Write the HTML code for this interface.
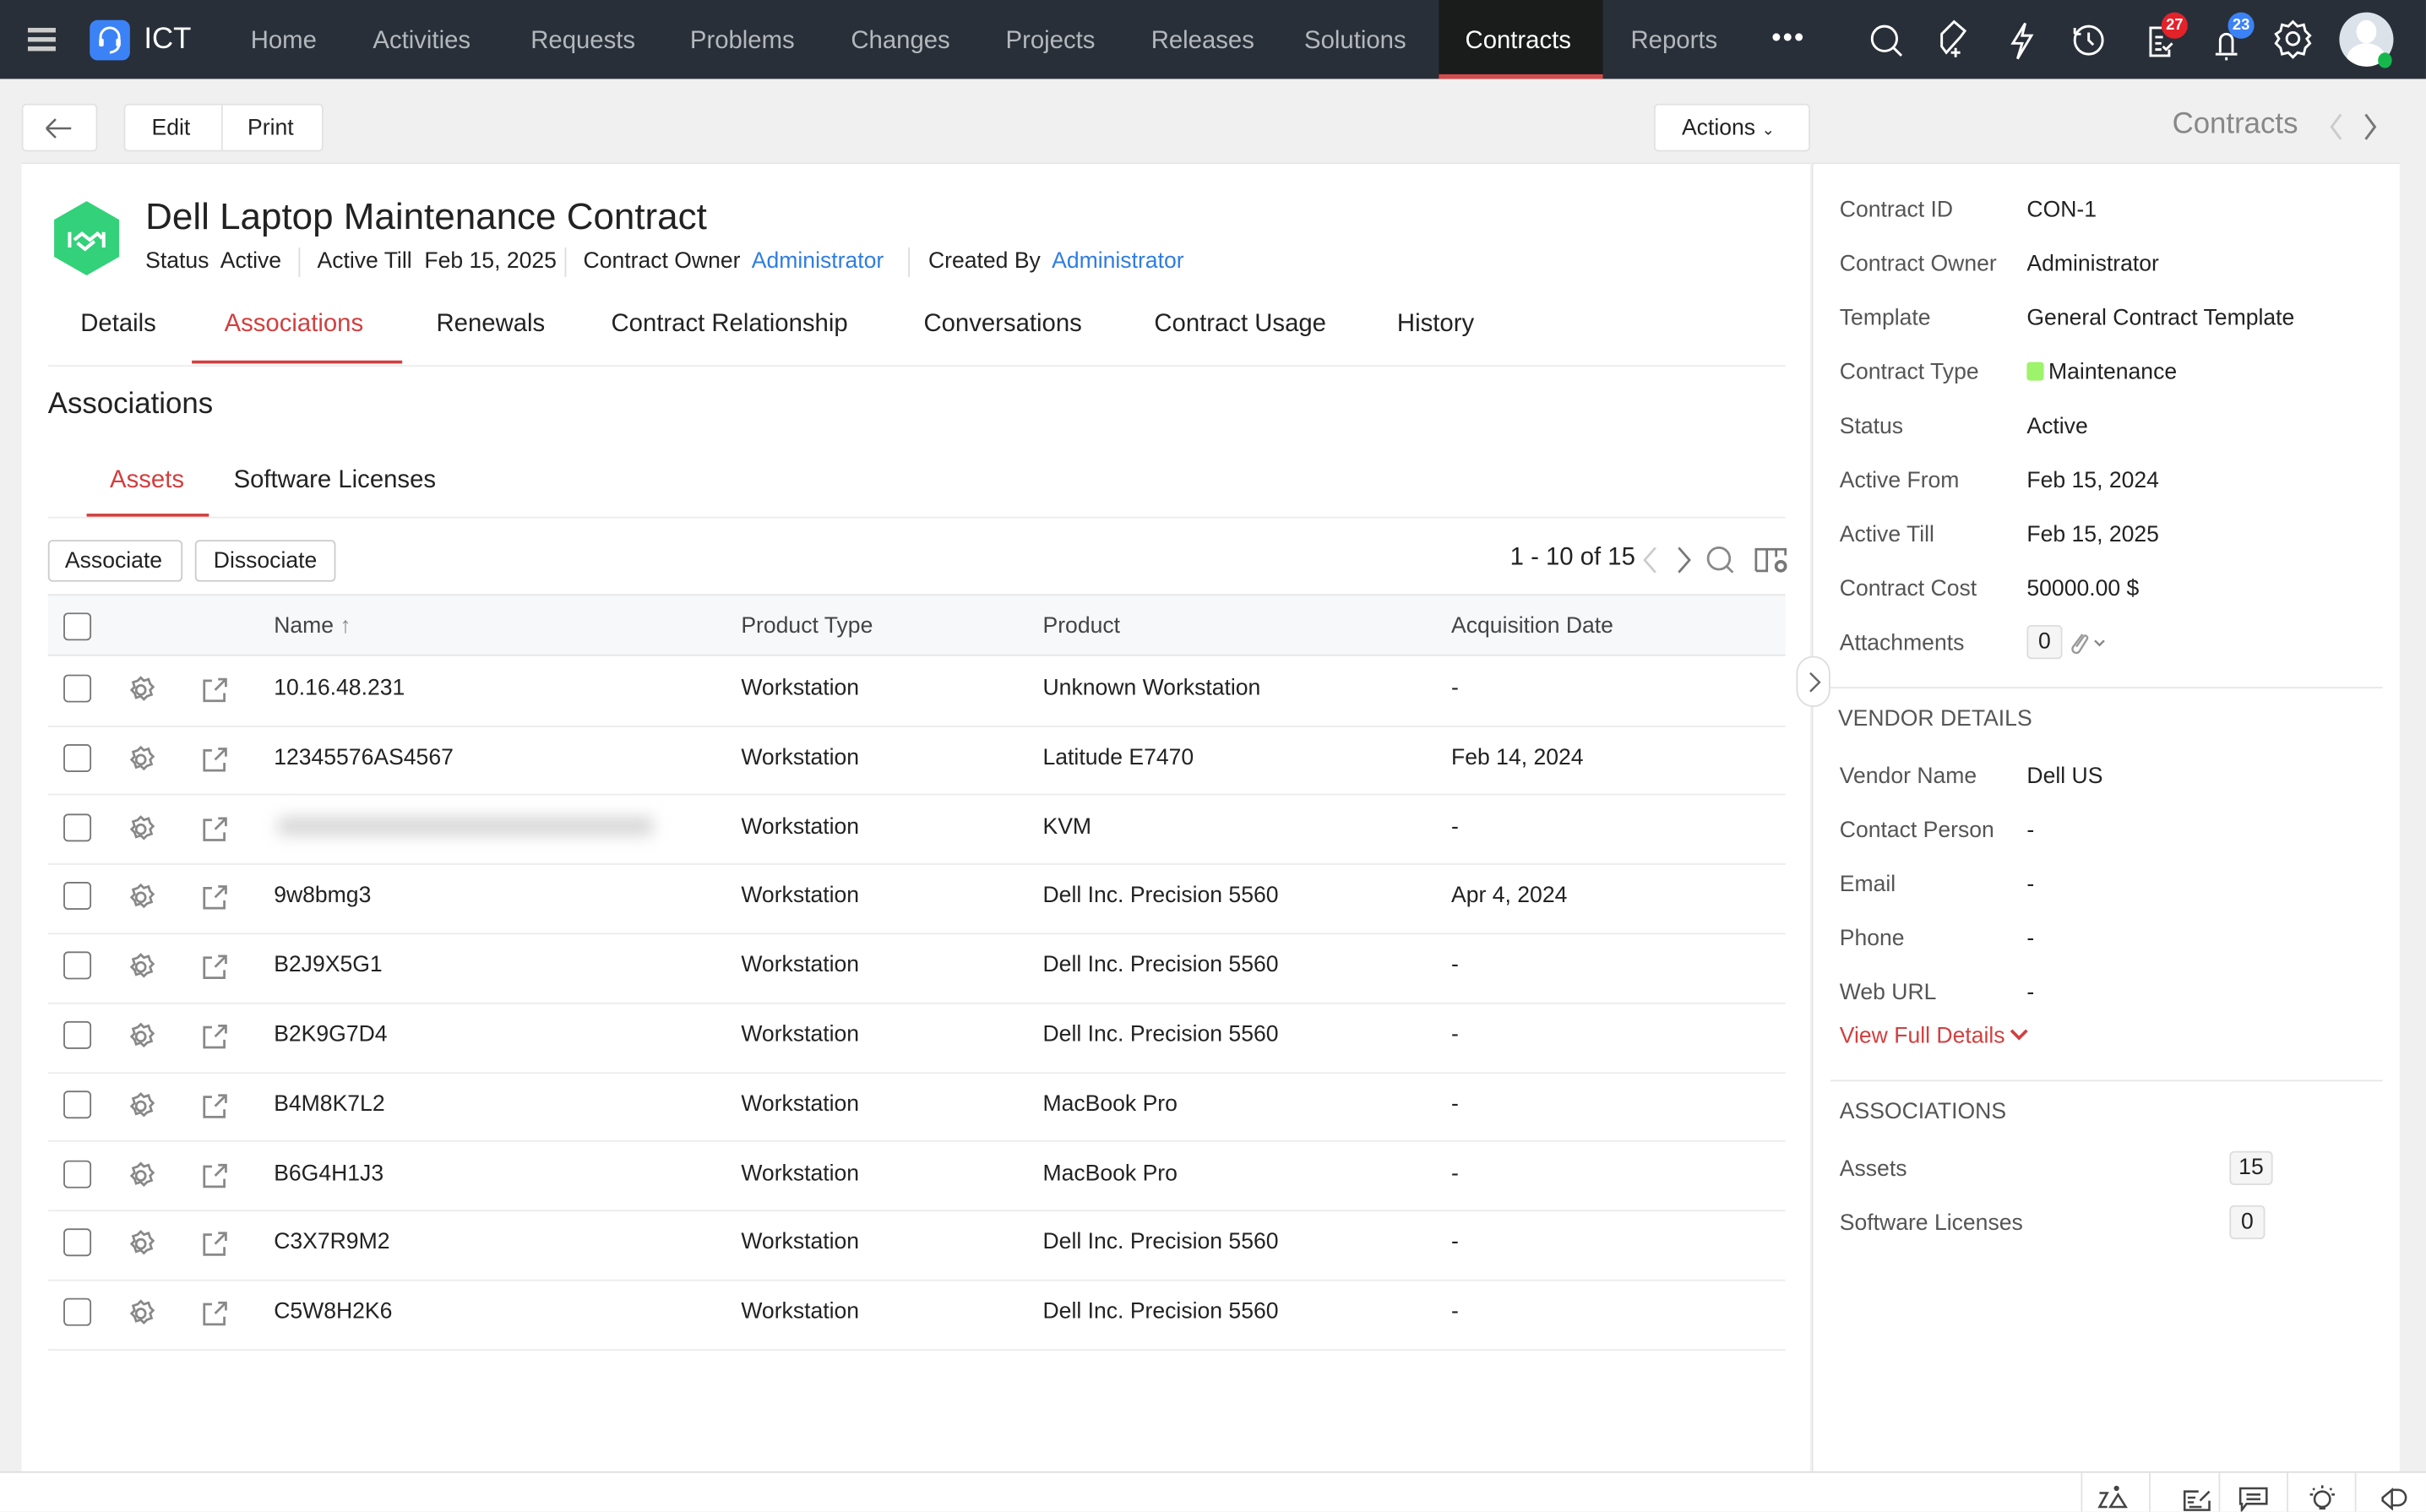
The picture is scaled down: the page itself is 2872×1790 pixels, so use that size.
<!DOCTYPE html>
<html><head><meta charset="utf-8">
<style>
*{box-sizing:border-box;margin:0;padding:0}
html,body{width:2872px;height:1790px;overflow:hidden;background:#f0f0f0}
#w{position:absolute;left:0;top:0;width:1568px;height:977px;transform:scale(1.8316);transform-origin:0 0;font-family:"Liberation Sans",sans-serif;color:#222;background:#f0f0f0}
.a{position:absolute;white-space:nowrap}
.nav{left:0;top:0;width:1568px;height:51px;background:#282f38}
.nv{top:18px;font-size:16px;color:#b4b8bd}
.btn{background:#fff;border:1px solid #e2e2e2;border-radius:3px}
.lbl{color:#555;font-size:14.5px;margin-top:1px}
.val{color:#222;font-size:14.5px;margin-top:1px}
.t{font-size:14.5px;color:#222;margin-top:1px}
.cb{width:18px;height:18px;border:1.5px solid #777;border-radius:3px;background:#fff}
.sep{height:1px;background:#ececec}
.cnt{border:1px solid #ddd;background:#f5f5f5;border-radius:3px;font-size:14.5px;text-align:center;height:22px;line-height:20px}
</style></head><body><div id="w">
<div class="a nav"></div>
<div class="a" style="left:18px;top:18px;width:18px;height:2.5px;background:#ccc;box-shadow:0 6px 0 #ccc,0 12px 0 #ccc"></div>
<div class="a" style="left:58px;top:13px;width:26px;height:26px;background:#3b82f6;border-radius:5px"></div>
<svg class="a" style="left:58px;top:13px" width="26" height="26" viewBox="0 0 26 26"><path d="M7 14 V11 a6 6 0 0 1 12 0 V14 M19 15 q0 5 -6 6" stroke="#fff" stroke-width="1.6" fill="none"/><rect x="6" y="12" width="3" height="5" rx="1" fill="#fff"/><rect x="17" y="12" width="3" height="5" rx="1" fill="#fff"/></svg>
<div class="a" style="left:93px;top:15px;font-size:19px;color:#fff">ICT</div>
<div class="a nv" style="left:162px">Home</div>
<div class="a nv" style="left:241px">Activities</div>
<div class="a nv" style="left:343px">Requests</div>
<div class="a nv" style="left:446px">Problems</div>
<div class="a nv" style="left:550px">Changes</div>
<div class="a nv" style="left:650px">Projects</div>
<div class="a nv" style="left:744px">Releases</div>
<div class="a nv" style="left:843px">Solutions</div>
<div class="a" style="left:930px;top:0;width:106px;height:51px;background:#1a1c1c;border-bottom:3px solid #d64b4b"></div>
<div class="a nv" style="left:947px;color:#fff">Contracts</div>
<div class="a nv" style="left:1054px">Reports</div>
<div class="a" style="left:1145px;top:14px;font-size:18px;color:#fff;letter-spacing:1px">•••</div>
<svg class="a" style="left:1200px;top:0" width="368" height="51" viewBox="0 0 368 51" fill="none" stroke="#fff" stroke-width="1.6">
<circle cx="18" cy="25" r="8"/><path d="M24 31 L29 36"/>
<path d="M55 22 L63 14 L70 20 L67 24 L58 34 L55 30 Z"/><path d="M64 31 v6 M61 34 h6"/>
<path d="M109 15 L101 28 H107 L104 38 L113 23 H107 Z"/>
<circle cx="150" cy="26" r="9"/><path d="M150 21 v5 l3 3"/><path d="M141 22 l0 -4 M141 22 l4 0"/>
<path d="M200 18 h-10 v18 h12 v-4"/><path d="M193 24 h5 M193 28 h4 M193 32 h4 M198 30 l2 2 l4 -4"/>
<path d="M232 35 h14 M235 34 v-8 a4 4 0 0 1 8 0 v8 M239 37 v2"/>
<circle cx="282" cy="25" r="4"/><path d="M282 14 l3 3 l4 -1 l1 4 l3 3 l-2 2 l2 3 l-3 3 l-1 4 l-4 -1 l-3 3 l-3 -3 l-4 1 l-1 -4 l-3 -3 l2 -3 l-2 -3 l3 -2 l1 -4 l4 1 z"/>
</svg>
<div class="a" style="left:1397px;top:8px;width:17px;height:17px;border-radius:50%;background:#e3222a;color:#fff;font-size:10px;font-weight:bold;text-align:center;line-height:17px">27</div>
<div class="a" style="left:1440px;top:8px;width:17px;height:17px;border-radius:50%;background:#3b82f6;color:#fff;font-size:10px;font-weight:bold;text-align:center;line-height:17px">23</div>
<div class="a" style="left:1512px;top:8px;width:35px;height:35px;border-radius:50%;background:#dce2ea;overflow:hidden"><div style="position:absolute;left:11px;top:5px;width:13px;height:15px;border-radius:50%;background:#fff"></div><div style="position:absolute;left:5px;top:20px;width:25px;height:20px;border-radius:50% 50% 0 0;background:#fff"></div></div>
<div class="a" style="left:1537px;top:34px;width:9px;height:10px;border-radius:50%;background:#16b84e"></div>

<div class="a btn" style="left:14px;top:67px;width:49px;height:31px"></div>
<svg class="a" style="left:26px;top:73px" width="24" height="20"><path d="M4 10 H20 M4 10 L10 4 M4 10 L10 16" stroke="#666" stroke-width="1.4" fill="none"/></svg>
<div class="a btn" style="left:80px;top:67px;width:129px;height:31px"></div>
<div class="a" style="left:143px;top:68px;width:1px;height:29px;background:#e2e2e2"></div>
<div class="a t" style="left:98px;top:74px">Edit</div>
<div class="a t" style="left:160px;top:74px">Print</div>
<div class="a btn" style="left:1069px;top:67px;width:101px;height:31px"></div>
<div class="a t" style="left:1087px;top:74px">Actions <span style="font-size:10px">⌄</span></div>
<div class="a" style="left:1404px;top:70px;font-size:19px;color:#888">Contracts</div>
<svg class="a" style="left:1500px;top:70px" width="44" height="24" fill="none" stroke-width="1.6"><path d="M13 4 L7 12 L13 20" stroke="#ccc"/><path d="M29 4 L35 12 L29 20" stroke="#777"/></svg>

<div class="a" style="left:14px;top:105px;width:1156px;height:846px;background:#fff;border-top:1px solid #e6e6e6"></div>
<svg class="a" style="left:32px;top:128px" width="48" height="52"><path d="M24 2 L45 14 V38 L24 50 L3 38 V14 Z" fill="#33d17a"/><path d="M13 22 v10 M35 22 v10 M16 27 l5 -4 l5 4 l5 -4 l3 3 M18 29 l5 4 l6 -5" stroke="#fff" stroke-width="2.2" fill="none"/></svg>
<div class="a" style="left:94px;top:127px;font-size:24px;color:#222">Dell Laptop Maintenance Contract</div>
<div class="a t" style="left:94px;top:160px">Status&nbsp; Active</div>
<div class="a" style="left:193px;top:160px;width:1px;height:19px;background:#ddd"></div>
<div class="a t" style="left:205px;top:160px">Active Till&nbsp; Feb 15, 2025</div>
<div class="a" style="left:365px;top:160px;width:1px;height:19px;background:#ddd"></div>
<div class="a t" style="left:377px;top:160px">Contract Owner&nbsp; <span style="color:#2f7de1">Administrator</span></div>
<div class="a" style="left:587px;top:160px;width:1px;height:19px;background:#ddd"></div>
<div class="a t" style="left:600px;top:160px">Created By&nbsp; <span style="color:#2f7de1">Administrator</span></div>

<div class="a" style="left:52px;top:201px;font-size:16px">Details</div>
<div class="a" style="left:145px;top:201px;font-size:16px;color:#d23f3f">Associations</div>
<div class="a" style="left:124px;top:233px;width:136px;height:2px;background:#d23f3f"></div>
<div class="a" style="left:282px;top:201px;font-size:16px">Renewals</div>
<div class="a" style="left:395px;top:201px;font-size:16px">Contract Relationship</div>
<div class="a" style="left:597px;top:201px;font-size:16px">Conversations</div>
<div class="a" style="left:746px;top:201px;font-size:16px">Contract Usage</div>
<div class="a" style="left:903px;top:201px;font-size:16px">History</div>
<div class="a sep" style="left:31px;top:236px;width:1123px"></div>

<div class="a" style="left:31px;top:251px;font-size:19px">Associations</div>
<div class="a" style="left:71px;top:302px;font-size:16px;color:#d23f3f">Assets</div>
<div class="a" style="left:56px;top:332px;width:79px;height:2px;background:#d23f3f"></div>
<div class="a" style="left:151px;top:302px;font-size:16px">Software Licenses</div>
<div class="a sep" style="left:31px;top:334px;width:1123px"></div>

<div class="a btn" style="left:31px;top:349px;width:87px;height:27px;border-color:#ccc"></div>
<div class="a t" style="left:42px;top:354px">Associate</div>
<div class="a btn" style="left:126px;top:349px;width:91px;height:27px;border-color:#ccc"></div>
<div class="a t" style="left:138px;top:354px">Dissociate</div>
<div class="a" style="left:976px;top:352px;font-size:16px">1 - 10 of 15</div>
<svg class="a" style="left:1056px;top:350px" width="104" height="24" fill="none" stroke-width="1.5"><path d="M14 4 L7 12 L14 20" stroke="#ccc"/><path d="M29 4 L36 12 L29 20" stroke="#777"/><circle cx="55" cy="11" r="7" stroke="#888"/><path d="M60 16 L64 20" stroke="#888"/><path d="M79 19 V5 H98 V9 M86 5 V19 H79 M92 5 V10" stroke="#777"/><circle cx="95" cy="16" r="3" stroke="#777" stroke-width="2"/></svg>

<div class="a" style="left:31px;top:384px;width:1123px;height:40px;background:#f6f8fa;border-top:1px solid #e6e6e6;border-bottom:1px solid #e6e6e6"></div>
<div class="a cb" style="left:41px;top:396px"></div>
<div class="a t" style="left:177px;top:396px;color:#444">Name <span style="color:#888">↑</span></div>
<div class="a t" style="left:479px;top:396px;color:#444">Product Type</div>
<div class="a t" style="left:674px;top:396px;color:#444">Product</div>
<div class="a t" style="left:938px;top:396px;color:#444">Acquisition Date</div>

<div id="rows"></div>
<script>
var d=[["10.16.48.231","Unknown Workstation","-"],["12345576AS4567","Latitude E7470","Feb 14, 2024"],["","KVM","-"],["9w8bmg3","Dell Inc. Precision 5560","Apr 4, 2024"],["B2J9X5G1","Dell Inc. Precision 5560","-"],["B2K9G7D4","Dell Inc. Precision 5560","-"],["B4M8K7L2","MacBook Pro","-"],["B6G4H1J3","MacBook Pro","-"],["C3X7R9M2","Dell Inc. Precision 5560","-"],["C5W8H2K6","Dell Inc. Precision 5560","-"]];
var h="";
var gear='<svg width="20" height="20" viewBox="0 0 20 20" fill="none" stroke="#888" stroke-width="1.5"><circle cx="10" cy="10" r="3"/><path d="M10 2 l2 2 l3 -1 l1 3 l2 2 l-2 2 l1 3 l-3 1 l-2 2 l-2 -2 l-3 1 l-1 -3 l-2 -2 l2 -2 l-1 -3 l3 -1 z"/></svg>';
var lnk='<svg width="20" height="20" viewBox="0 0 20 20" fill="none" stroke="#888" stroke-width="1.5"><path d="M8 4 H3 V17 H16 V12"/><path d="M10 10 L17 3 M12 3 H17 V8"/></svg>';
for(var i=0;i<10;i++){var y=424+i*44.8;
h+='<div class="a cb" style="left:41px;top:'+(y+12)+'px"></div>';
h+='<div class="a" style="left:81px;top:'+(y+12)+'px">'+gear+'</div>';
h+='<div class="a" style="left:129px;top:'+(y+12)+'px">'+lnk+'</div>';
if(d[i][0])h+='<div class="a t" style="left:177px;top:'+(y+12)+'px">'+d[i][0]+'</div>';
else h+='<div class="a" style="left:180px;top:'+(y+14)+'px;width:242px;height:12px;background:#d6d6d6;filter:blur(5px)"></div>';
h+='<div class="a t" style="left:479px;top:'+(y+12)+'px">Workstation</div>';
h+='<div class="a t" style="left:674px;top:'+(y+12)+'px">'+d[i][1]+'</div>';
h+='<div class="a t" style="left:938px;top:'+(y+12)+'px">'+d[i][2]+'</div>';
h+='<div class="a sep" style="left:31px;top:'+(y+44.5)+'px;width:1123px"></div>';}
document.getElementById('rows').innerHTML=h;
</script>

<div class="a" style="left:1171px;top:105px;width:380px;height:846px;background:#fff;border-left:1px solid #e6e6e6;border-top:1px solid #e6e6e6"></div>
<div class="a" style="left:1161px;top:424px;width:22px;height:33px;border:1px solid #ddd;border-radius:11px;background:#fff"></div>
<svg class="a" style="left:1166px;top:432px" width="14" height="18"><path d="M4 3 L10 9 L4 15" stroke="#666" stroke-width="1.3" fill="none"/></svg>
<div class="a lbl" style="left:1189px;top:127px">Contract ID</div><div class="a val" style="left:1310px;top:127px">CON-1</div>
<div class="a lbl" style="left:1189px;top:162px">Contract Owner</div><div class="a val" style="left:1310px;top:162px">Administrator</div>
<div class="a lbl" style="left:1189px;top:197px">Template</div><div class="a val" style="left:1310px;top:197px">General Contract Template</div>
<div class="a lbl" style="left:1189px;top:232px">Contract Type</div><div class="a" style="left:1310px;top:234px;width:11px;height:12px;background:#9df36a;border-radius:2px"></div><div class="a val" style="left:1324px;top:232px">Maintenance</div>
<div class="a lbl" style="left:1189px;top:267px">Status</div><div class="a val" style="left:1310px;top:267px">Active</div>
<div class="a lbl" style="left:1189px;top:302px">Active From</div><div class="a val" style="left:1310px;top:302px">Feb 15, 2024</div>
<div class="a lbl" style="left:1189px;top:337px">Active Till</div><div class="a val" style="left:1310px;top:337px">Feb 15, 2025</div>
<div class="a lbl" style="left:1189px;top:372px">Contract Cost</div><div class="a val" style="left:1310px;top:372px">50000.00 $</div>
<div class="a lbl" style="left:1189px;top:407px">Attachments</div><div class="a cnt" style="left:1310px;top:404px;width:23px">0</div>
<svg class="a" style="left:1336px;top:406px" width="30" height="18" fill="none"><path d="M10 4 L4 12 a2.5 2.5 0 0 0 4 3 L13 7 a1.5 1.5 0 0 0 -2 -2 L6 12" stroke="#999" stroke-width="1.3"/><path d="M18 8 L21 11 L24 8" stroke="#888" stroke-width="1.3"/></svg>
<div class="a sep" style="left:1183px;top:444px;width:357px;background:#e6e6e6"></div>
<div class="a" style="left:1188px;top:457px;font-size:14.5px;color:#555">VENDOR DETAILS</div>
<div class="a lbl" style="left:1189px;top:493px">Vendor Name</div><div class="a val" style="left:1310px;top:493px">Dell US</div>
<div class="a lbl" style="left:1189px;top:528px">Contact Person</div><div class="a val" style="left:1310px;top:528px">-</div>
<div class="a lbl" style="left:1189px;top:563px">Email</div><div class="a val" style="left:1310px;top:563px">-</div>
<div class="a lbl" style="left:1189px;top:598px">Phone</div><div class="a val" style="left:1310px;top:598px">-</div>
<div class="a lbl" style="left:1189px;top:633px">Web URL</div><div class="a val" style="left:1310px;top:633px">-</div>
<div class="a" style="left:1189px;top:662px;font-size:14.5px;color:#d23f3f">View Full Details</div>
<svg class="a" style="left:1298px;top:662px" width="14" height="14"><path d="M2 4 L7 9 L12 4" stroke="#d23f3f" stroke-width="2" fill="none"/></svg>
<div class="a sep" style="left:1183px;top:698px;width:357px;background:#e6e6e6"></div>
<div class="a" style="left:1189px;top:711px;font-size:14.5px;color:#555">ASSOCIATIONS</div>
<div class="a lbl" style="left:1189px;top:747px">Assets</div><div class="a cnt" style="left:1441px;top:744px;width:28px">15</div>
<div class="a lbl" style="left:1189px;top:782px">Software Licenses</div><div class="a cnt" style="left:1441px;top:779px;width:23px">0</div>

<div class="a" style="left:0;top:951px;width:1568px;height:26px;background:#fff;border-top:1px solid #ddd"></div>
<div class="a" style="left:1345px;top:952px;width:1px;height:25px;background:#e3e3e3;box-shadow:44px 0 0 #e3e3e3,89px 0 0 #e3e3e3,133px 0 0 #e3e3e3,177px 0 0 #e3e3e3"></div>
<svg class="a" style="left:1346px;top:952px" width="222" height="25" fill="none" stroke="#444" stroke-width="1.4">
<path d="M11 13 h5 l-5 9 h5 M18 22 l5 -8 l5 8 z"/><circle cx="22" cy="10" r="1" fill="#444"/>
<path d="M75 12 h-9 v12 h16 v-6"/><path d="M68 16 h5 M68 19 h4 M69 22 h8 M76 18 l6 -6"/>
<path d="M102 10 h17 v10 h-13 l-3 4 v-4 h-1 z"/><path d="M106 14 h9 M106 17 h9"/>
<circle cx="155" cy="17" r="5"/><path d="M153 23 h4 M155 8 v2 M147 14 h2 M161 14 h2 M149 10 l1 1 M161 10 l-1 1"/>
<path d="M194 16 l6 -5 v12 l-6 -5 z M200 11 h4 a5 5 0 0 1 0 10 h-4"/>
</svg>
</div></body></html>
